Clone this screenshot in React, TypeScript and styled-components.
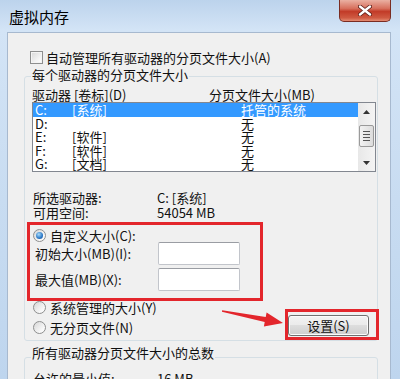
import styled, { createGlobalStyle } from "styled-components";

const GlobalStyle = createGlobalStyle`
  html, body {
    margin: 0;
    padding: 0;
  }
  body {
    width: 400px;
    height: 379px;
    overflow: hidden;
    background: #c9ddf2;
    font-family: "Noto Sans CJK SC", "Liberation Sans", sans-serif;
    font-size: 13px;
    color: #111;
  }
`;

const Window = styled.div`
  position: relative;
  width: 400px;
  height: 379px;
  overflow: hidden;
  display: flex;
  flex-direction: column;
  background: linear-gradient(to bottom, #bcd3ec 0px, #d3e4f6 30px, #c8dcf1 200px, #bed5ee);
`;

const TitleBar = styled.div`
  height: 32px;
  flex: none;
  display: flex;
  align-items: flex-start;
  justify-content: space-between;
  padding: 0 9px 0 9px;
`;

const Title = styled.div`
  margin-top: 9px;
  font-size: 15px;
  line-height: 16px;
  color: #000;
`;

const CloseButton = styled.div`
  width: 52px;
  height: 22px;
  box-sizing: border-box;
  border: 1px solid #7a2c22;
  border-top: none;
  border-radius: 0 0 5px 5px;
  background: linear-gradient(#eab0a2, #d7705d 40%, #c23b28 55%, #cf5a42 85%, #e48c73);
  display: flex;
  align-items: center;
  justify-content: center;
`;

const Client = styled.div`
  flex: 1;
  margin: 0 9px 0 7px;
  border: 1px solid #a7b9cf;
  border-bottom: none;
  background: #f0f0f0;
  display: flex;
  flex-direction: column;
  padding-top: 16px;
`;

const CheckRow = styled.div`
  display: flex;
  align-items: center;
  gap: 3px;
  height: 16px;
  margin-left: 22px;
  white-space: nowrap;
`;

const CheckBox = styled.span`
  width: 13px;
  height: 13px;
  box-sizing: border-box;
  border: 1px solid #8e8f8f;
  background: linear-gradient(135deg, #d8d8d8, #f6f6f6 70%, #fff);
  box-shadow: inset 0 0 0 1px #f4f4f4;
  flex: none;
`;

const GroupBox = styled.div<{ $top: number }>`
  margin: ${(p) => p.$top}px 0 0 16px;
  width: 354px;
  box-sizing: border-box;
  border: 1px solid #d5dfe5;
  border-radius: 3px;
  display: flex;
  flex-direction: column;
`;

const Legend = styled.div<{ $lift: number }>`
  align-self: flex-start;
  margin: -${(p) => p.$lift}px 0 0 6px;
  padding: 0 1px;
  height: 16px;
  line-height: 16px;
  background: #f0f0f0;
  white-space: nowrap;
`;

const HeaderRow = styled.div`
  display: grid;
  grid-template-columns: 177px 1fr;
  margin: 4px 0 0 7px;
  height: 15px;
  line-height: 15px;
  white-space: nowrap;
`;

const ListBox = styled.div`
  margin-left: 7px;
  width: 344px;
  height: 70px;
  box-sizing: border-box;
  border: 1px solid #828790;
  background: #fff;
  display: flex;
`;

const Rows = styled.div`
  flex: 1;
  display: flex;
  flex-direction: column;
  overflow: hidden;
`;

const DriveRow = styled.div<{ $selected?: boolean }>`
  display: grid;
  grid-template-columns: 37px 169px 1fr;
  padding-left: 2px;
  height: 13.6px;
  line-height: 13.6px;
  flex: none;
  white-space: nowrap;
  background: ${(p) => (p.$selected ? "#3399ff" : "transparent")};
  color: ${(p) => (p.$selected ? "#fff" : "#111")};
`;

const ScrollBar = styled.div`
  width: 17px;
  flex: none;
  background: linear-gradient(to right, #e8e8e8, #f4f4f4);
  display: flex;
  flex-direction: column;
  align-items: center;
`;

const ScrollArrow = styled.div`
  height: 17px;
  width: 17px;
  display: flex;
  align-items: center;
  justify-content: center;
`;

const ScrollThumb = styled.div`
  margin-top: 5px;
  width: 15px;
  height: 22px;
  box-sizing: border-box;
  border: 1px solid #9a9a9a;
  border-radius: 2px;
  background: linear-gradient(to right, #f2f2f2, #dcdcdc);
  display: flex;
  flex-direction: column;
  align-items: center;
  justify-content: center;
  gap: 2px;
  margin-bottom: auto;
`;

const Grip = styled.span`
  width: 7px;
  height: 1px;
  background: #555;
`;

const InfoRow = styled.div<{ $top?: number }>`
  display: grid;
  grid-template-columns: 124px 1fr;
  margin: ${(p) => p.$top ?? 0}px 0 0 8px;
  height: 15px;
  line-height: 15px;
  white-space: nowrap;
`;

const RedFrame = styled.div`
  border: 3px solid #e3262c;
  box-sizing: border-box;
`;

const CustomFrame = styled(RedFrame)`
  margin: 2px 0 0 2px;
  width: 236px;
  padding: 4px 0 7px 0;
  display: flex;
  flex-direction: column;
`;

const RadioRow = styled.div<{ $height: number; $top?: number }>`
  display: flex;
  align-items: center;
  gap: 4px;
  height: ${(p) => p.$height}px;
  margin-top: ${(p) => p.$top ?? 0}px;
  white-space: nowrap;
`;

const Radio = styled.span<{ $checked?: boolean }>`
  width: 13px;
  height: 13px;
  box-sizing: border-box;
  border-radius: 50%;
  border: 1px solid #8e8f8f;
  background: linear-gradient(135deg, #d6d6d6, #f7f7f7 70%, #fff);
  display: flex;
  align-items: center;
  justify-content: center;
  flex: none;

  &::after {
    content: "";
    display: ${(p) => (p.$checked ? "block" : "none")};
    width: 7px;
    height: 7px;
    border-radius: 50%;
    background: radial-gradient(circle at 40% 35%, #a8dcfb, #2b77c6 60%, #174f93);
  }
`;

const FieldRow = styled.div<{ $top?: number }>`
  display: flex;
  align-items: center;
  height: 23px;
  margin-top: ${(p) => p.$top ?? 0}px;
  padding-left: 5px;
  white-space: nowrap;
`;

const FieldLabel = styled.span`
  width: 123px;
  flex: none;
`;

const TextBox = styled.div`
  width: 82px;
  height: 23px;
  box-sizing: border-box;
  border: 1px solid #c2c5cb;
  border-top-color: #9a9da3;
  border-radius: 2px;
  background: #fff;
`;

const BottomRow = styled.div`
  display: flex;
  margin-top: -1px;
`;

const RadioColumn = styled.div`
  display: flex;
  flex-direction: column;
  margin-left: 8px;
`;

const ButtonFrame = styled(RedFrame)`
  margin: 9px -2px 0 auto;
  width: 94px;
  height: 31px;
  padding: 3px 0 0 0;
`;

const Button = styled.div`
  width: 81px;
  height: 21px;
  box-sizing: border-box;
  border: 1px solid #707070;
  border-radius: 3px;
  background: linear-gradient(#f2f2f2, #ebebeb 45%, #dddddd 50%, #cfcfcf);
  box-shadow: inset 0 0 0 1px #fbfbfb;
  display: flex;
  align-items: center;
  justify-content: center;
  line-height: 19px;
  white-space: nowrap;
`;

const Arrow = styled.svg`
  position: absolute;
  left: 218px;
  top: 306px;
  pointer-events: none;
`;

const drives = [
  { id: "C:", label: "[系统]", size: "托管的系统", selected: true },
  { id: "D:", label: "", size: "无" },
  { id: "E:", label: "[软件]", size: "无" },
  { id: "F:", label: "[软件]", size: "无" },
  { id: "G:", label: "[文档]", size: "无" },
];

export default function App() {
  return (
    <Window>
      <GlobalStyle />
      <TitleBar>
        <Title>虚拟内存</Title>
        <CloseButton>
          <svg width="14" height="11" viewBox="0 0 14 11">
            <path d="M2 1.5 L12 9.5 M12 1.5 L2 9.5" stroke="#5a1d16" strokeWidth="4" strokeLinecap="round" />
            <path d="M2 1.5 L12 9.5 M12 1.5 L2 9.5" stroke="#fff" strokeWidth="2.4" strokeLinecap="round" />
          </svg>
        </CloseButton>
      </TitleBar>
      <Client>
        <CheckRow>
          <CheckBox />
          <span>自动管理所有驱动器的分页文件大小(A)</span>
        </CheckRow>
        <GroupBox $top={11}>
          <Legend $lift={10}>每个驱动器的分页文件大小</Legend>
          <HeaderRow>
            <span>驱动器 [卷标](D)</span>
            <span>分页文件大小(MB)</span>
          </HeaderRow>
          <ListBox>
            <Rows>
              {drives.map((d) => (
                <DriveRow key={d.id} $selected={d.selected}>
                  <span>{d.id}</span>
                  <span>{d.label}</span>
                  <span>{d.size}</span>
                </DriveRow>
              ))}
            </Rows>
            <ScrollBar>
              <ScrollArrow>
                <svg width="7" height="4" viewBox="0 0 7 4">
                  <path d="M0 4 L3.5 0 L7 4 Z" fill="#333" />
                </svg>
              </ScrollArrow>
              <ScrollThumb>
                <Grip />
                <Grip />
                <Grip />
                <Grip />
              </ScrollThumb>
              <ScrollArrow>
                <svg width="7" height="4" viewBox="0 0 7 4">
                  <path d="M0 0 L7 0 L3.5 4 Z" fill="#333" />
                </svg>
              </ScrollArrow>
            </ScrollBar>
          </ListBox>
          <InfoRow $top={18}>
            <span>所选驱动器:</span>
            <span>C: [系统]</span>
          </InfoRow>
          <InfoRow>
            <span>可用空间:</span>
            <span>54054 MB</span>
          </InfoRow>
          <CustomFrame>
            <RadioRow $height={13} style={{ paddingLeft: 3 }}>
              <Radio $checked />
              <span>自定义大小(C):</span>
            </RadioRow>
            <FieldRow>
              <FieldLabel>初始大小(MB)(I):</FieldLabel>
              <TextBox />
            </FieldRow>
            <FieldRow $top={3}>
              <FieldLabel>最大值(MB)(X):</FieldLabel>
              <TextBox />
            </FieldRow>
          </CustomFrame>
          <BottomRow>
            <RadioColumn>
              <RadioRow $height={14}>
                <Radio />
                <span>系统管理的大小(Y)</span>
              </RadioRow>
              <RadioRow $height={14} $top={6}>
                <Radio />
                <span>无分页文件(N)</span>
              </RadioRow>
            </RadioColumn>
            <ButtonFrame>
              <Button>设置(S)</Button>
            </ButtonFrame>
          </BottomRow>
        </GroupBox>
        <GroupBox $top={16}>
          <Legend $lift={13}>所有驱动器分页文件大小的总数</Legend>
          <InfoRow $top={10}>
            <span>允许的最小值:</span>
            <span>16 MB</span>
          </InfoRow>
        </GroupBox>
      </Client>
      <Arrow width="70" height="26" viewBox="218 306 70 26">
        <polygon
          points="222.2,310.2 265.7,317.1 266.6,312.6 283,323 263.9,326.4 264.7,322 221.9,311.8"
          fill="#e3262c"
        />
      </Arrow>
    </Window>
  );
}
